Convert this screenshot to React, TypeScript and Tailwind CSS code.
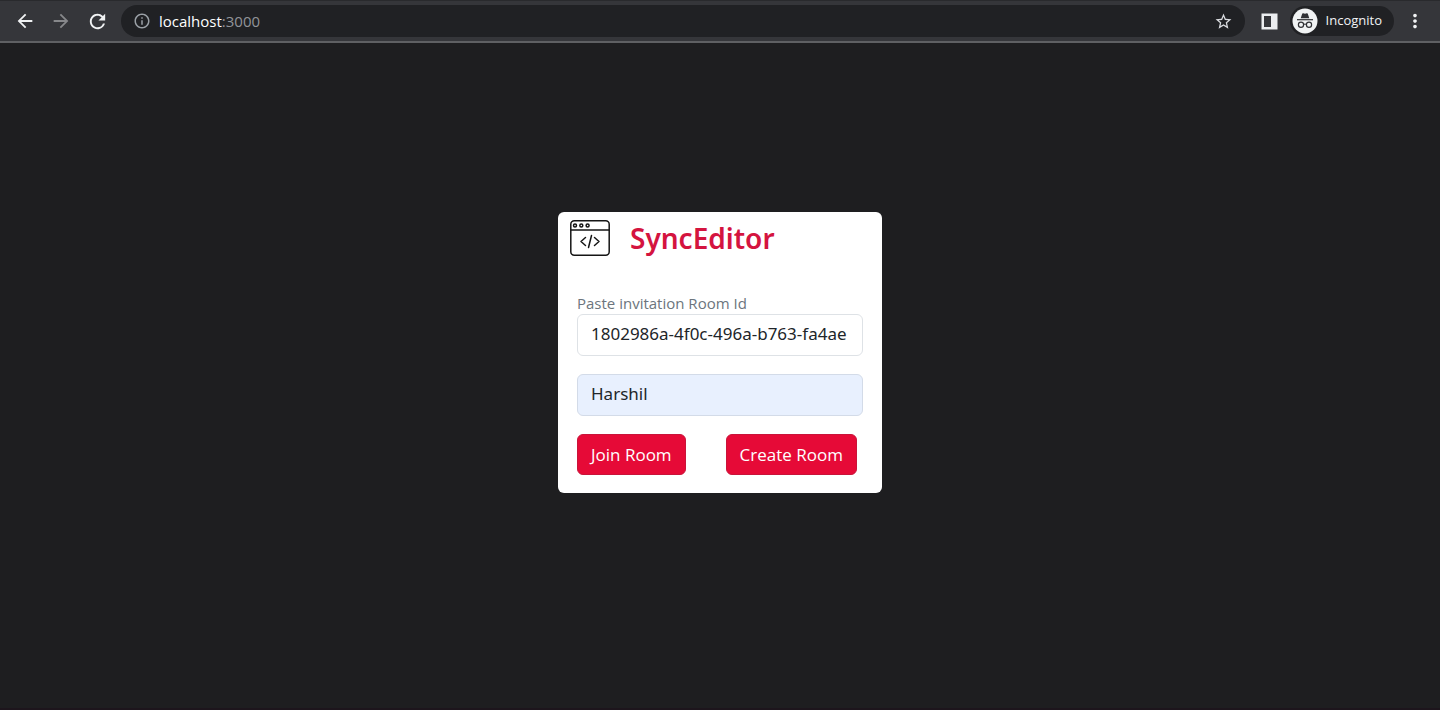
import { useState } from "react";
import { MdArrowBack, MdArrowForward, MdInfoOutline, MdMoreVert, MdRefresh, MdStarBorder } from "react-icons/md";

const inputClass =
  "h-[42px] w-full rounded-md border px-[13px] pb-1 font-['Noto_Sans',sans-serif] text-[17px] text-[#212529] outline-none";
const buttonClass =
  "h-[41px] rounded-md border border-[#c9143a] bg-[#e60a37] px-[13px] text-[17px] text-white";

function EditorLogo() {
  return (
    <svg width="40" height="36" viewBox="0 0 40 36" fill="none" stroke="#151515" strokeWidth="1.5" strokeLinecap="round" strokeLinejoin="round">
      <rect x="0.8" y="0.8" width="38.4" height="34.4" rx="3.5" />
      <path d="M1 10H39" />
      <circle cx="5" cy="5.5" r="1.5" />
      <circle cx="11.3" cy="5.5" r="1.5" />
      <circle cx="17.6" cy="5.5" r="1.5" />
      <path d="M15.5 17.5L11 21.5L15.5 25.5M24.5 17.5L29 21.5L24.5 25.5M21.5 15.5L18.5 27.5" />
    </svg>
  );
}

function IncognitoIcon() {
  return (
    <svg width="26" height="26" viewBox="0 0 26 26">
      <circle cx="13" cy="13" r="12.5" fill="#f1f3f4" />
      <path d="M8.7 10.2L10.2 5.7Q10.5 5 11.2 5.2L13 5.7L14.8 5.2Q15.5 5 15.8 5.7L17.3 10.2Z" fill="#303135" />
      <path d="M5 11.7H21" stroke="#303135" strokeWidth="1.2" />
      <g fill="none" stroke="#303135" strokeWidth="1.2">
        <circle cx="9" cy="16.8" r="2.6" />
        <circle cx="17" cy="16.8" r="2.6" />
        <path d="M11.6 16.4Q13 15.6 14.4 16.4" />
      </g>
    </svg>
  );
}

function BrowserBar() {
  return (
    <header className="flex h-[43px] items-center border-t border-b-2 border-t-[#292a2d] border-b-[#5f6063] bg-[#35363a] pr-3.5 pl-[13px]">
      <nav className="flex gap-3">
        <button aria-label="Back" className="grid size-6 place-items-center text-[#f1f3f4]">
          <MdArrowBack size={22} />
        </button>
        <button aria-label="Forward" className="grid size-6 place-items-center text-[#87888b]">
          <MdArrowForward size={22} />
        </button>
        <button aria-label="Reload" className="grid size-6 place-items-center text-[#f1f3f4]">
          <MdRefresh size={23} />
        </button>
      </nav>
      <div className="ml-3 flex h-8 flex-1 items-center rounded-full bg-[#202124] pr-3 pl-3">
        <MdInfoOutline size={18} className="text-[#9aa0a6]" />
        <p className="ml-2 flex-1 text-[15px] text-white">
          localhost<span className="text-[#929499]">:3000</span>
        </p>
        <button aria-label="Bookmark this tab" className="text-[#dadce0]">
          <MdStarBorder size={19} />
        </button>
      </div>
      <button aria-label="Side panel" className="ml-4">
        <svg width="17" height="17" viewBox="0 0 17 17">
          <path d="M0.5 0.5H16.5V16.5H0.5ZM3 3V14H10V3Z" fill="#eceef0" fillRule="evenodd" />
        </svg>
      </button>
      <button className="ml-3 flex h-[30px] items-center gap-2 rounded-full bg-[#202124] pr-3 pl-0.5 text-[13px] text-[#f1f3f4]">
        <IncognitoIcon />
        Incognito
      </button>
      <button aria-label="Menu" className="ml-2.5 text-[#f1f3f4]">
        <MdMoreVert size={22} />
      </button>
    </header>
  );
}

export default function App() {
  const [roomId, setRoomId] = useState("1802986a-4f0c-496a-b763-fa4ae");
  const [username, setUsername] = useState("Harshil");

  return (
    <div className="flex min-h-screen flex-col bg-[#1e1e20] font-['Open_Sans','Noto_Sans',sans-serif]">
      <BrowserBar />
      <main className="flex flex-1 items-center justify-center pb-[46px]">
        <div className="w-[324px] rounded-md bg-white">
          <div className="flex items-center gap-5 px-3 pt-2">
            <EditorLogo />
            <h1 className="font-['Noto_Sans',sans-serif] text-[28px] leading-9 font-semibold text-[#d4143f]">SyncEditor</h1>
          </div>
          <form className="px-[19px] pt-9 pb-[18px]" onSubmit={(e) => e.preventDefault()}>
            <label htmlFor="roomId" className="block text-[15px] leading-[22px] text-[#6c757d]">
              Paste invitation Room Id
            </label>
            <input
              id="roomId"
              className={`${inputClass} border-[#dee2e6] bg-white`}
              value={roomId}
              onChange={(e) => setRoomId(e.target.value)}
            />
            <input
              aria-label="Username"
              className={`${inputClass} mt-[18px] border-[#d3dbe8] bg-[#e8f0fe]`}
              value={username}
              onChange={(e) => setUsername(e.target.value)}
            />
            <div className="mt-[18px] flex gap-10">
              <button type="submit" className={buttonClass}>Join Room</button>
              <button type="button" className={buttonClass}>Create Room</button>
            </div>
          </form>
        </div>
      </main>
      <footer className="h-0.5 bg-[#1d151c]" />
    </div>
  );
}
